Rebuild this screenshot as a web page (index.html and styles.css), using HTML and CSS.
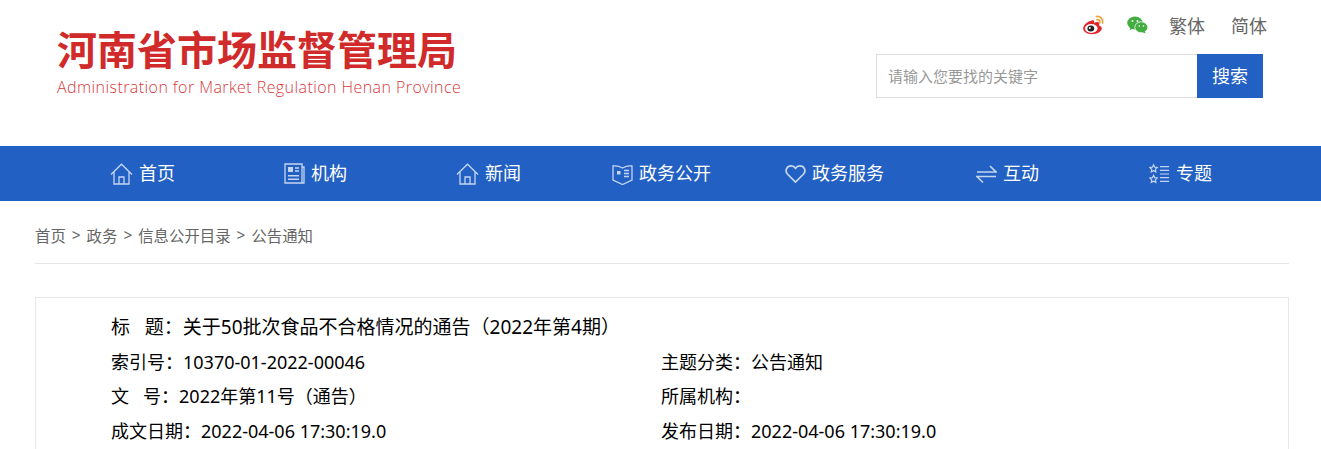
FILE: index.html
```html
<!DOCTYPE html>
<html lang="zh-CN">
<head>
  <meta charset="UTF-8">
  <meta name="viewport" content="width=device-width, initial-scale=1.0">
  <title>关于50批次食品不合格情况的通告</title>
  <link rel="stylesheet" href="styles.css">
</head>
<body>
  <div class="header">
    <div class="logo">
      <div class="logo-cn">河南省市场监督管理局</div>
      <div class="logo-en">Administration for Market Regulation Henan Province</div>
    </div>
    <div class="header-right">
      <div class="tools">
        <svg class="icon-weibo" width="24" height="22" viewBox="0 0 24 22">
          <path d="M10 6.500C5.500 7.200 1.200 11 1.200 14.600c0 3.200 4 5.600 8.600 5.600 5.400 0 10-2.800 10-6 0-1.700-1.600-2.500-2.800-2.800 .7-1.500 .3-3-1.200-3.300-1.200-.2-2.600 .3-3.600 .8 .3-1.600-.5-3-2.200-2.400z" fill="#e2252b"/>
          <ellipse cx="9.300" cy="14.400" rx="6.300" ry="4.500" fill="#fff"/>
          <ellipse cx="8.800" cy="14.500" rx="3.400" ry="3" fill="#222"/>
          <circle cx="7.800" cy="14" r="1" fill="#fff"/>
          <path d="M14.500 2.500c3.500-.8 7 2.400 6 6.500M15 5.800c1.800-.4 3.200 1 2.800 2.800" fill="none" stroke="#f0a23a" stroke-width="1.700" stroke-linecap="round"/>
        </svg>
        <svg class="icon-wechat" width="21" height="18" viewBox="0 0 21 18">
          <ellipse cx="8" cy="7" rx="7.800" ry="6.500" fill="#43ad3f"/>
          <path d="M3.500 11l-.8 3.200 3.500-2z" fill="#43ad3f"/>
          <ellipse cx="14.300" cy="11.300" rx="6.500" ry="5.500" stroke="#fff" stroke-width=".8" fill="#43ad3f"/>
          <path d="M17.500 15l1 2.500-3.300-1.500z" fill="#43ad3f"/>
          <circle cx="5.500" cy="5" r="1" fill="#fff"/>
          <circle cx="10.500" cy="5" r="1" fill="#fff"/>
          <circle cx="12.300" cy="10" r=".8" fill="#fff"/>
          <circle cx="16.500" cy="10" r=".8" fill="#fff"/>
        </svg>
        <a class="tool-link" href="#">繁体</a>
        <a class="tool-link" href="#">简体</a>
      </div>
      <form class="search">
        <input class="search-input" type="text" placeholder="请输入您要找的关键字">
        <button class="search-btn" type="button">搜索</button>
      </form>
    </div>
  </div>

  <div class="nav">
    <a class="nav-item" href="#">
      <svg class="nav-icon" width="23" height="22" viewBox="0 0 23 22">
        <path d="M1 11.500L11.500 1.200 22 11.500M4 9v12h15V9M9 21v-7h5v7"/>
      </svg><span>首页</span></a>
    <a class="nav-item" href="#">
      <svg class="nav-icon" width="21" height="21" viewBox="0 0 21 21">
        <path d="M1 1h17v19H1zM18 4h2v16h-2"/>
        <path class="fill" d="M4 4h5v5H4zM4 12h11v1.500H4zM4 15.500h11V17H4z"/>
        <path d="M11 5h4M11 8h4"/>
      </svg><span>机构</span></a>
    <a class="nav-item" href="#">
      <svg class="nav-icon" width="23" height="22" viewBox="0 0 23 22">
        <path d="M1 11.500L11.500 1.200 22 11.500M4 9v12h15V9M9 21v-7h5v7"/>
      </svg><span>新闻</span></a>
    <a class="nav-item" href="#">
      <svg class="nav-icon" width="21" height="22" viewBox="0 0 21 22">
        <path d="M1 3c3-.5 6 0 9.500 2 3.500-2 6.500-2.500 9.500-2v14l-9.500 4.500L1 17z"/>
        <path class="fill" d="M5 8h3.500v3.500H5z"/>
        <path d="M12 7.500h5M12 10.500h5M12 13.500h5"/>
      </svg><span>政务公开</span></a>
    <a class="nav-item" href="#">
      <svg class="nav-icon" width="21" height="20" viewBox="0 0 22 20">
        <path stroke-width="1.800" d="M11 18.500L2.500 10C-.5 6.500 2 1.500 6.500 1.500c2 0 3.500 1 4.500 2.500 1-1.500 2.500-2.500 4.500-2.500 4.500 0 7 5 4 8.500z"/>
      </svg><span>政务服务</span></a>
    <a class="nav-item" href="#">
      <svg class="nav-icon" width="21" height="20" viewBox="0 0 21 20">
        <path stroke-width="1.600" d="M1 8h19L14 2M20 12.500H1L7 18.500"/>
      </svg><span>互动</span></a>
    <a class="nav-item" href="#">
      <svg class="nav-icon" width="21" height="22" viewBox="0 0 23 22">
        <path d="M5 1l1.300 2.500 2.700.4-2 2 .5 2.800L5 7.400 2.500 8.700 3 5.900l-2-2 2.700-.4zM5 12.500l1.300 2.500 2.700.4-2 2 .5 2.800L5 18.900l-2.500 1.300.5-2.800-2-2 2.700-.4z"/>
        <path d="M12 3h10M12 7h10M12 11h10M12 15h10M12 19h10"/>
      </svg><span>专题</span></a>
  </div>

  <div class="main">
    <div class="crumbs">
      <a href="#">首页</a><span class="sep">&gt;</span><a href="#">政务</a><span class="sep">&gt;</span><a href="#">信息公开目录</a><span class="sep">&gt;</span><a href="#">公告通知</a>
    </div>

    <div class="info-box">
      <div class="info-row info-title">标&nbsp;&nbsp;&nbsp;题：关于50批次食品不合格情况的通告（2022年第4期）</div>
      <div class="info-grid">
        <div class="info-row">索引号：10370-01-2022-00046</div>
        <div class="info-row">主题分类：公告通知</div>
        <div class="info-row">文&nbsp;&nbsp;&nbsp;号：2022年第11号（通告）</div>
        <div class="info-row">所属机构：</div>
        <div class="info-row">成文日期：2022-04-06 17:30:19.0</div>
        <div class="info-row">发布日期：2022-04-06 17:30:19.0</div>
      </div>
    </div>
  </div>
</body>
</html>
```

FILE: styles.css
```css
html, body {
  height: 100%;
  overflow: hidden;
}

body {
  margin: 0;
  background-color: #fff;
  font-family: "Noto Sans", "Noto Sans CJK SC", sans-serif;
  color: #000;
}

a {
  color: inherit;
  text-decoration: none;
}

/* header */
.header {
  height: 146px;
  display: flex;
  justify-content: space-between;
  box-sizing: border-box;
  padding: 0 58px 0 57px;
}

.logo {
  padding-top: 20px;
}

.logo-cn {
  font-family: "Noto Sans CJK SC", sans-serif;
  font-size: 40px;
  line-height: 57px;
  font-weight: 700;
  color: #d12a2a;
}

.logo-en {
  font-family: "Open Sans", sans-serif;
  font-size: 16px;
  font-weight: 300;
  line-height: 20px;
  letter-spacing: 0.43px;
  color: #d9383a;
}

.header-right {
  display: flex;
  flex-direction: column;
  align-items: flex-end;
}

.tools {
  display: flex;
  align-items: center;
  height: 50px;
  margin: 0 -4px 4px 0;
}

.icon-weibo {
  margin-right: 21px;
}

.icon-wechat {
  margin-right: 21px;
}

.tool-link {
  font-family: "Noto Sans CJK SC", sans-serif;
  font-size: 18px;
  color: #666;
  margin-right: 26px;
}

.tool-link:last-child {
  margin-right: 0;
}

.search {
  display: flex;
  height: 44px;
}

.search-input {
  width: 321px;
  box-sizing: border-box;
  border: 1px solid #ddd;
  border-right: none;
  padding: 0 11px 2px;
  font-family: "Noto Sans CJK SC", sans-serif;
  font-size: 15px;
  outline: none;
}

.search-input::placeholder {
  color: #999;
}

.search-btn {
  width: 66px;
  border: none;
  background-color: #2261c3;
  color: #fff;
  font-family: "Noto Sans CJK SC", sans-serif;
  font-size: 18px;
  padding: 0 0 2px;
}

/* nav bar */
.nav {
  height: 55px;
  background-color: #2261c3;
  display: flex;
  padding-left: 56px;
}

.nav-item {
  width: 173px;
  display: flex;
  align-items: center;
  justify-content: center;
  gap: 6px;
  color: #fff;
  font-family: "Noto Sans CJK SC", sans-serif;
  font-size: 18px;
}

.nav-item span {
  padding-bottom: 3px;
}

.nav-icon {
  fill: none;
  stroke: #c6d5ef;
  stroke-width: 1.300;
}

.nav-icon .fill {
  fill: #c6d5ef;
  stroke: none;
}

/* content */
.main {
  padding: 0 32px 0 35px;
}

.crumbs {
  height: 56px;
  padding-top: 6px;
  display: flex;
  align-items: center;
  font-size: 15.400px;
  color: #666;
  border-bottom: 1px solid #e5e5e5;
}

.sep {
  margin: 0 6px;
}

.info-box {
  margin-top: 33px;
  border: 1px solid #e8e8e8;
  padding: 12px 75px 40px;
  min-height: 300px;
  font-size: 18px;
}

.info-title {
  font-size: 19px;
}

.info-row {
  line-height: 34.670px;
}

.info-grid {
  display: grid;
  grid-template-columns: 550px 1fr;
}
```
